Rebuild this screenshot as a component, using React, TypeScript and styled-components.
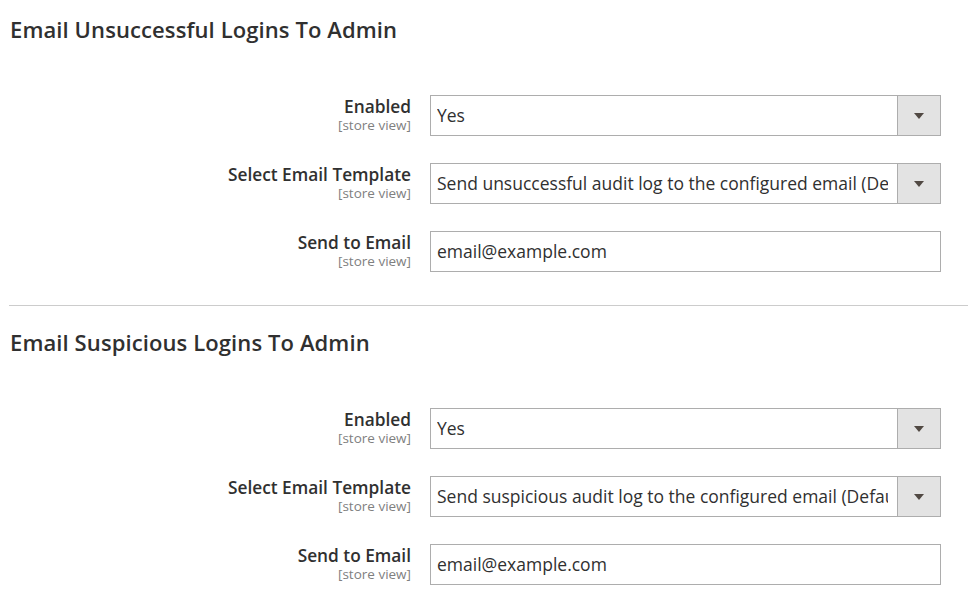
import React from 'react';
import styled, { createGlobalStyle } from 'styled-components';

const GlobalStyle = createGlobalStyle`
  html, body {
    margin: 0;
    padding: 0;
    background: #ffffff;
  }
  body {
    font-family: 'Open Sans', 'Liberation Sans', sans-serif;
    color: #303030;
  }
`;

type Field = {
  label: string;
  kind: 'select' | 'text';
  value: string;
};

type Group = {
  title: string;
  fields: Field[];
};

const groups: Group[] = [
  {
    title: 'Email Unsuccessful Logins To Admin',
    fields: [
      { label: 'Enabled', kind: 'select', value: 'Yes' },
      { label: 'Select Email Template', kind: 'select', value: 'Send unsuccessful audit log to the configured email (Default)' },
      { label: 'Send to Email', kind: 'text', value: 'email@example.com' }
    ]
  },
  {
    title: 'Email Suspicious Logins To Admin',
    fields: [
      { label: 'Enabled', kind: 'select', value: 'Yes' },
      { label: 'Select Email Template', kind: 'select', value: 'Send suspicious audit log to the configured email (Default)' },
      { label: 'Send to Email', kind: 'text', value: 'email@example.com' }
    ]
  }
];

const Page = styled.div`
  padding: 15px 0 0 9px;
  width: 968px;
  box-sizing: border-box;
`;

const Section = styled.section`
  display: flex;
  flex-direction: column;
`;

const Title = styled.h3<{ $first?: boolean }>`
  margin: ${p => (p.$first ? '0' : '22px')} 0 52px 1px;
  font-size: 22px;
  line-height: 28px;
  font-weight: 600;
  color: #303030;
  letter-spacing: 0.1px;
`;

const Rows = styled.div`
  display: grid;
  grid-template-columns: 402px 511px;
  column-gap: 19px;
  row-gap: 27px;
`;

const Label = styled.div`
  display: flex;
  flex-direction: column;
  align-items: flex-end;
  text-align: right;
  padding-top: 2px;
`;

const LabelText = styled.span`
  font-size: 17.3px;
  line-height: 19px;
  font-weight: 600;
  color: #303030;
`;

const Scope = styled.span`
  margin-top: 1px;
  font-size: 13.5px;
  line-height: 16px;
  color: #808080;
`;

const Control = styled.div`
  display: flex;
  height: 41px;
  box-sizing: border-box;
  border: 1px solid #adadad;
  background: #ffffff;
`;

const Value = styled.div`
  flex: 1;
  min-width: 0;
  padding: 0 9px 0 6px;
  font-size: 17.5px;
  line-height: 39px;
  color: #303030;
`;

const ValueText = styled.div`
  overflow: hidden;
  white-space: nowrap;
`;

const Toggle = styled.div`
  width: 42px;
  flex: none;
  border-left: 1px solid #adadad;
  background: #e3e3e3;
  display: flex;
  align-items: center;
  justify-content: center;
`;

const Arrow = styled.span`
  width: 0;
  height: 0;
  border-left: 5px solid transparent;
  border-right: 5px solid transparent;
  border-top: 6px solid #514943;
`;

const Divider = styled.hr`
  margin: 33px 0 0 0;
  border: 0;
  border-top: 1px solid #cccccc;
  width: 100%;
`;

function FieldRow({ field }: { field: Field }) {
  return (
    <>
      <Label>
        <LabelText>{field.label}</LabelText>
        <Scope>[store view]</Scope>
      </Label>
      <Control>
        <Value>
          <ValueText>{field.value}</ValueText>
        </Value>
        {field.kind === 'select' && (
          <Toggle>
            <Arrow />
          </Toggle>
        )}
      </Control>
    </>
  );
}

export default function App() {
  return (
    <Page>
      <GlobalStyle />
      {groups.map((group, i) => (
        <Section key={group.title}>
          <Title $first={i === 0}>{group.title}</Title>
          <Rows>
            {group.fields.map(f => (
              <FieldRow key={f.label} field={f} />
            ))}
          </Rows>
          {i === 0 && <Divider />}
        </Section>
      ))}
    </Page>
  );
}
